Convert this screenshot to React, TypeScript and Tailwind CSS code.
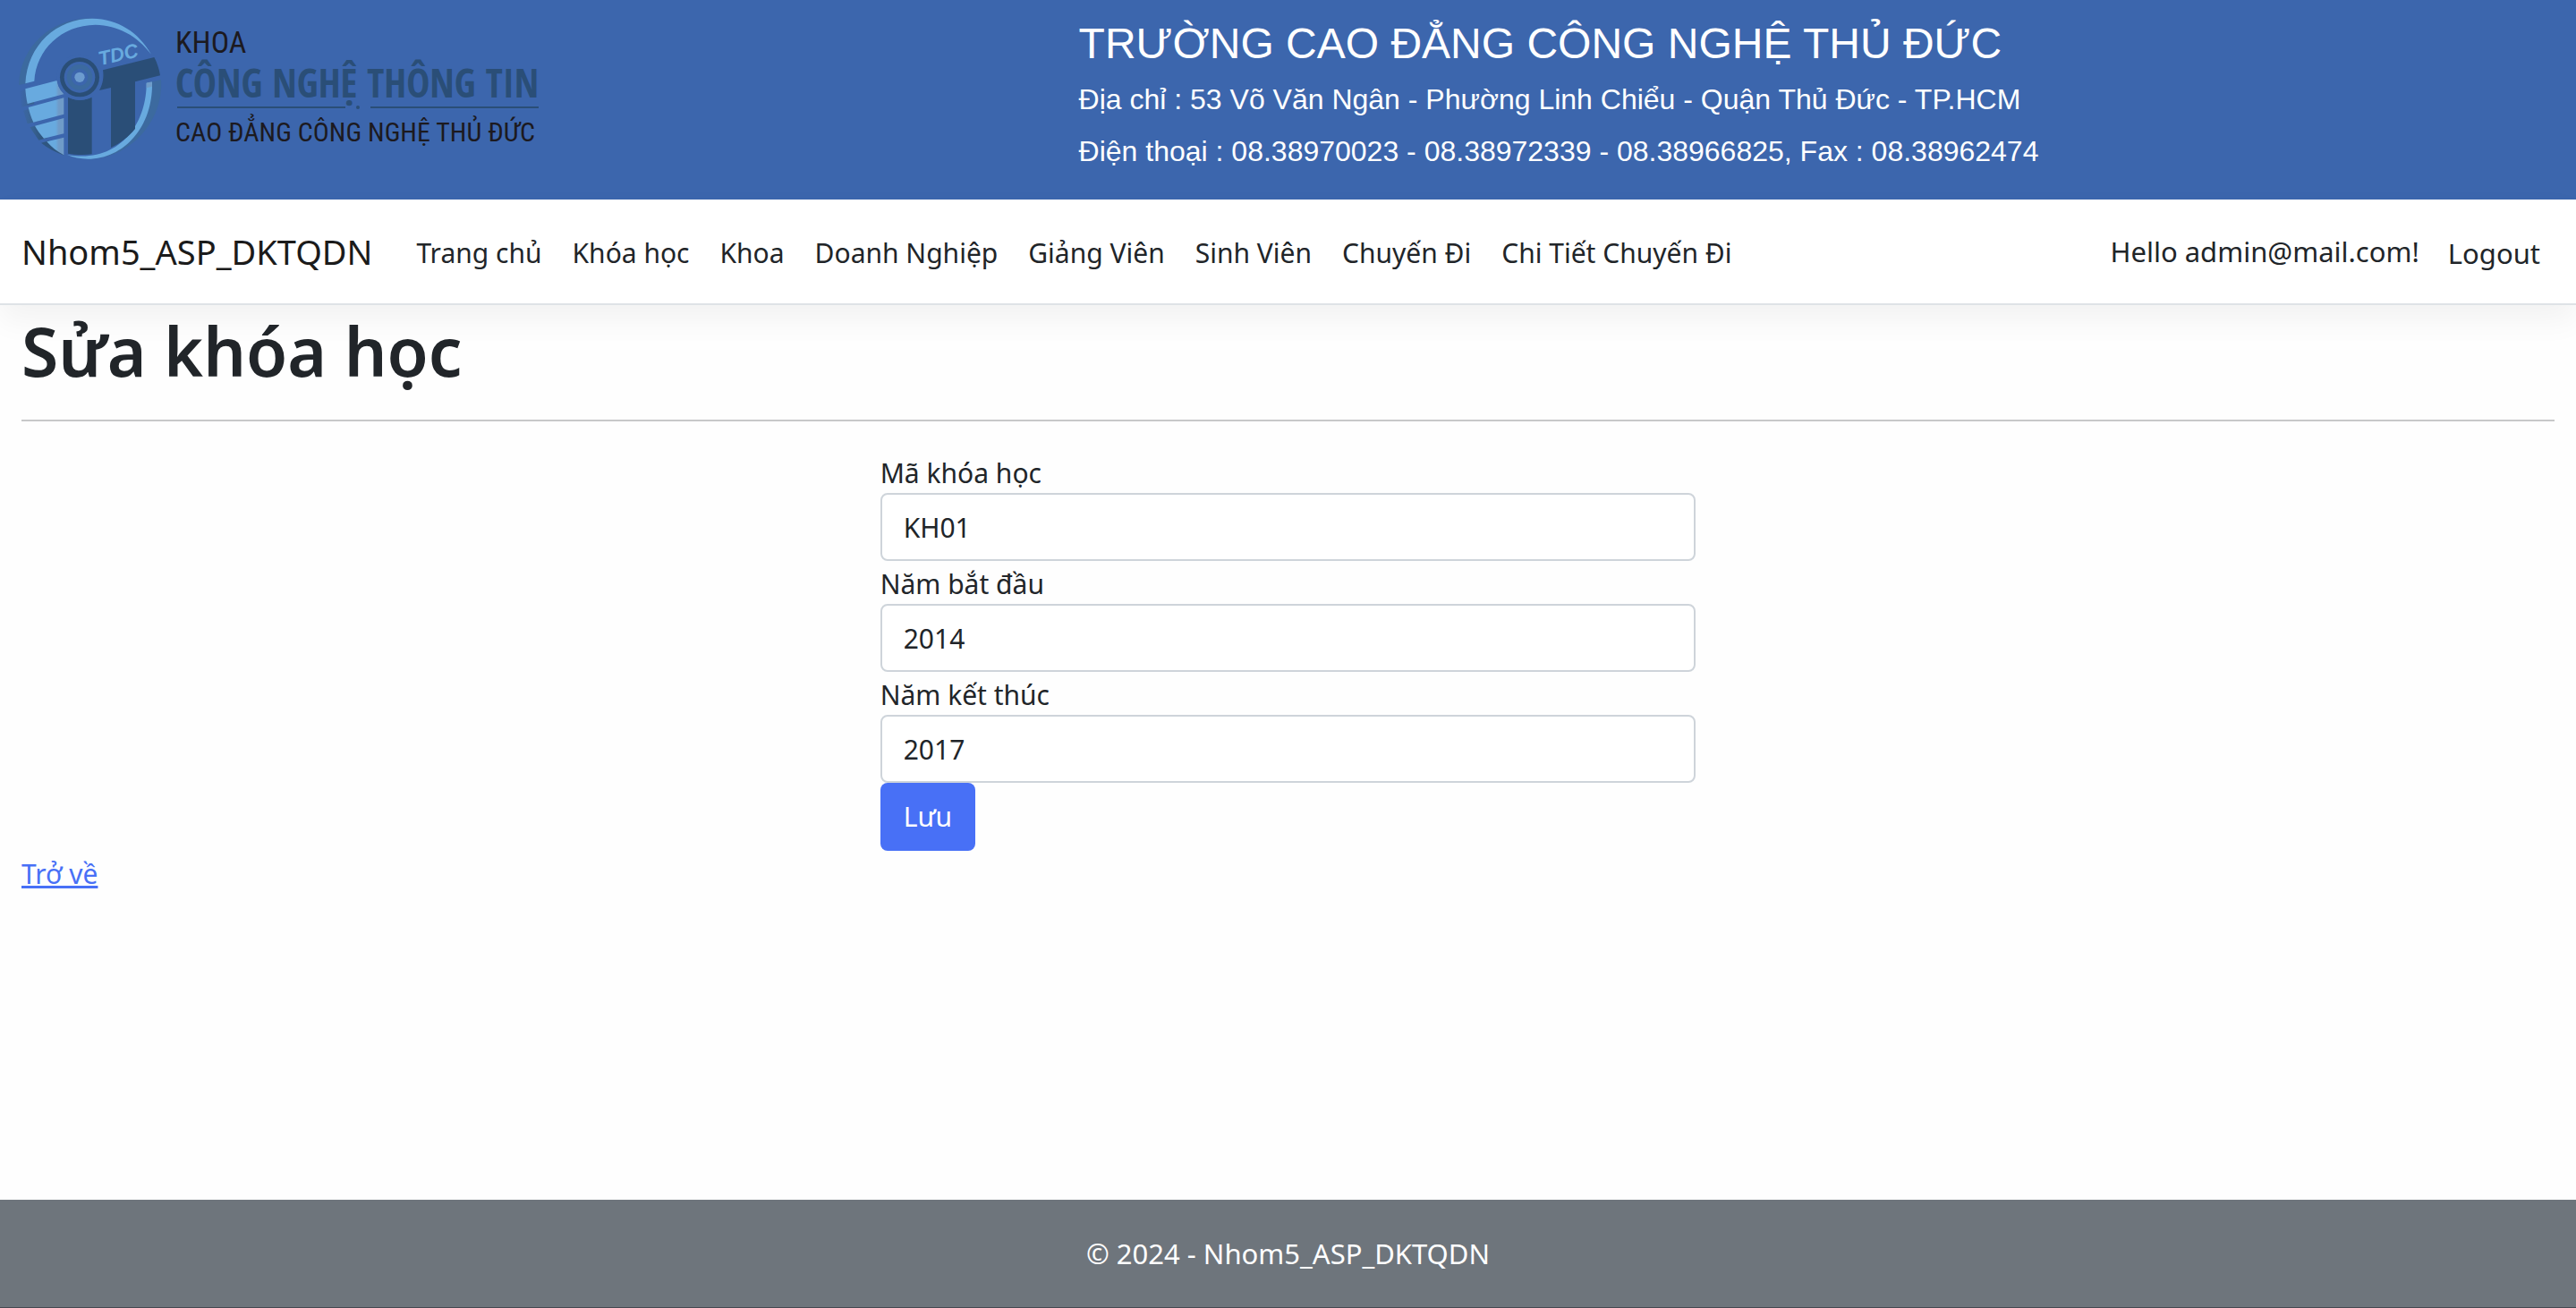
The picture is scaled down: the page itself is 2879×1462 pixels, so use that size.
import React from 'react';

const navItems = [
  'Trang chủ',
  'Khóa học',
  'Khoa',
  'Doanh Nghiệp',
  'Giảng Viên',
  'Sinh Viên',
  'Chuyến Đi',
  'Chi Tiết Chuyến Đi',
];

const fields = [
  { id: 'ma-khoa-hoc', label: 'Mã khóa học', value: 'KH01' },
  { id: 'nam-bat-dau', label: 'Năm bắt đầu', value: '2014' },
  { id: 'nam-ket-thuc', label: 'Năm kết thúc', value: '2017' },
];

function Emblem() {
  return (
    <svg className="h-[180px] w-[190px] shrink-0" viewBox="0 0 570 540" aria-hidden="true">
      <defs>
        <linearGradient id="slice" x1="50" x2="186" y1="0" y2="0" gradientUnits="userSpaceOnUse">
          <stop offset="0.78" stopColor="#68aadf" />
          <stop offset="0.86" stopColor="#6f9bc8" />
          <stop offset="1" stopColor="#6f9bc8" />
        </linearGradient>
        <linearGradient id="shade" x1="33" x2="110" y1="0" y2="0" gradientUnits="userSpaceOnUse">
          <stop offset="0" stopColor="#3c66ad" />
          <stop offset="0.5" stopColor="#3a6596" />
          <stop offset="1" stopColor="#2f5680" />
        </linearGradient>
      </defs>
      <path d="M33 255 C38 120 150 25 285 32 C150 50 70 140 60 250 Z" fill="#3c6a9f" />
      <path d="M35 275 L75 264 L85 318 L43 329 Z M48 341 L85 331 L100 376 L62 385 Z M70 397 L105 388 L130 432 L100 440 Z M108 449 L135 442 L185 491 C155 480 128 465 108 449 Z" fill="url(#shade)" />
      <path d="M462 248 L510 237 C520 380 400 505 265 503 C400 480 465 380 462 248 Z" fill="#3c6a9f" />
      <path d="M55 250 C62 120 160 32 280 32 C365 33 435 78 477 152 C430 90 365 54 290 53 C175 55 92 135 85 242 Z" fill="#68aadf" />
      <path d="M480 245 C484 395 385 503 265 503 C240 503 215 498 195 489 C370 520 462 385 461 248 Z" fill="#68aadf" />
      <path d="M461 248 L479 244 L480 260 L461 265 Z" fill="#6f9bc8" />
      <path d="M55 268 L161 240 C165 260 174 275 186 285 L62 318 C58 300 56 284 55 268 Z M65 330 L184 298 L184 353 L82 380 C74 363 69 347 65 330 Z M87 392 L184 366 L184 418 L117 434 C104 419 94 405 87 392 Z M127 445 L184 431 L184 490 C161 477 142 463 127 445 Z" fill="url(#slice)" />
      <path d="M198 296 C222 308 255 308 278 296 L278 487 C250 490 222 489 198 485 Z" fill="#2a4e77" />
      <path d="M315 205 L487 162 C497 181 504 202 507 223 L423 244 L423 402 C400 430 374 450 342 465 L342 264 L303 273 C315 252 319 228 315 205 Z" fill="#2a4e77" />
      <circle cx="237" cy="229" r="77" fill="#3c66ad" />
      <circle cx="237" cy="229" r="66" fill="#2a4e77" />
      <circle cx="237" cy="229" r="52" fill="#3c66ad" />
      <circle cx="237" cy="229" r="43" fill="#3c6a9f" />
      <circle cx="237" cy="229" r="28" fill="#3c66ad" />
      <circle cx="237" cy="229" r="17" fill="#6c9bcf" />
      <text
        x="305"
        y="190"
        transform="rotate(-13 305 190)"
        fill="#68aadf"
        className="font-['Liberation_Sans'] text-[66px] font-bold italic"
      >
        TDC
      </text>
    </svg>
  );
}

function Logo() {
  return (
    <div className="flex pl-[10px] pt-[10px]">
      <Emblem />
      <div className="-ml-1 w-[406px] whitespace-nowrap pt-3 font-['Roboto_Condensed',sans-serif] text-[30px] leading-[52px] text-[#1c1a1f]">
        <p className="text-[34px] leading-[50px]">KHOA</p>
        <p className="font-['Open_Sans_Condensed','Roboto_Condensed',sans-serif] text-[44px] font-bold leading-[40px] text-[#2a4e77]">
          CÔNG NGHỆ THÔNG TIN
        </p>
        <div className="mt-1.5 flex items-center gap-3 pl-0.5">
          <span className="h-0.5 flex-1 bg-[#2a4e77]" />
          <span className="size-1 rounded-full bg-[#2a4e77]" />
          <span className="h-0.5 flex-1 bg-[#2a4e77]" />
        </div>
        <p>CAO ĐẲNG CÔNG NGHỆ THỦ ĐỨC</p>
      </div>
    </div>
  );
}

export default function App() {
  return (
    <div className="flex min-h-screen flex-col bg-[#fefefe] font-['Noto_Sans',sans-serif] text-[30px] leading-[48px] text-[#212529]">
      <div className="grid grid-cols-12 bg-[#3c66ad] pb-[25px]">
        <div className="col-span-5">
          <Logo />
        </div>
        <div className="col-span-7 whitespace-nowrap pl-1.5 pt-4 font-['Liberation_Sans',sans-serif] text-[32px] leading-[58px] text-white">
          <p className="text-[48px] leading-[66px]">TRƯỜNG CAO ĐẲNG CÔNG NGHỆ THỦ ĐỨC</p>
          <p>Địa chỉ : 53 Võ Văn Ngân - Phường Linh Chiểu - Quận Thủ Đức - TP.HCM</p>
          <p>Điện thoại : 08.38970023 - 08.38972339 - 08.38966825, Fax : 08.38962474</p>
        </div>
      </div>

      <header>
        <nav className="flex h-[118px] items-center whitespace-nowrap border-b-2 border-[#dee2e6] bg-white px-6 shadow-[0_16px_32px_rgba(0,0,0,0.05)]">
          <a href="#" className="mr-8 text-[38px] leading-[60px] text-[#1b1b1b]">
            Nhom5_ASP_DKTQDN
          </a>
          <ul className="flex flex-1 pt-1">
            {navItems.map((item) => (
              <li key={item}>
                <a href="#" className="block px-[17px]">
                  {item}
                </a>
              </li>
            ))}
          </ul>
          <a href="#" className="px-4 text-[31px]">
            Hello admin@mail.com!
          </a>
          <button type="button" className="px-4 pt-1 text-[31px]">
            Logout
          </button>
        </nav>
      </header>

      <main className="flex-1 px-6">
        <h1 className="pt-1.5 text-[75px] font-semibold leading-[90px]">Sửa khóa học</h1>
        <hr className="my-8 border-t-2 border-[#c7c8c9]" />
        <div className="-mx-6 grid grid-cols-3">
          <form className="col-start-2 px-6" onSubmit={(e) => e.preventDefault()}>
            {fields.map((f) => (
              <div key={f.id}>
                <label htmlFor={f.id} className="block pt-1 leading-[44px]">
                  {f.label}
                </label>
                <input
                  id={f.id}
                  type="text"
                  defaultValue={f.value}
                  className="block h-[76px] w-full rounded-lg border-2 border-[#ced4da] bg-white px-6"
                />
              </div>
            ))}
            <button type="submit" className="block h-[76px] rounded-lg bg-[#4870f6] px-[26px] text-white">
              Lưu
            </button>
          </form>
        </div>
        <a href="#" className="block w-fit pt-1 leading-[44px] text-[#4870f6] underline">
          Trở về
        </a>
      </main>

      <footer className="border-b border-[#454850] bg-[#6e757c] py-9 text-center text-[31px] text-white">
        © 2024 - Nhom5_ASP_DKTQDN
      </footer>
    </div>
  );
}
